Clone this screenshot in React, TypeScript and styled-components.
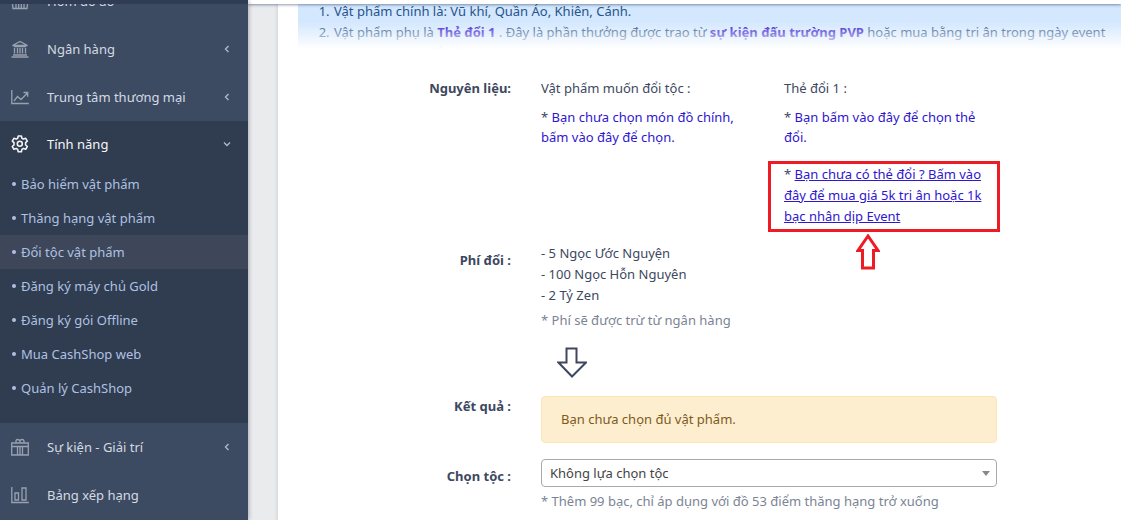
import React from 'react';
import styled, { createGlobalStyle, css } from 'styled-components';

const GlobalStyle = createGlobalStyle`
  *, *::before, *::after { box-sizing: border-box; }
  html { height: 100%; }
  body {
    margin: 0;
    background: #eaebed;
    color: #3d4860;
    font-family: "Segoe UI", "Noto Sans", "Open Sans", sans-serif;
    font-size: 13px;
    line-height: 21px;
    overflow: hidden;
  }
  a { color: #2f16cf; text-decoration: none; }
`;

const Page = styled.div`
  display: grid;
  grid-template-columns: 248px minmax(0, 1fr);
  height: 100vh;
  overflow: hidden;
`;

const Sidebar = styled.aside`
  background: #3c4b62;
  border-top: 4px solid #303c53;
  box-shadow: 1px 0 4px rgba(30, 40, 60, 0.3);
  overflow: hidden;
  z-index: 2;
`;

const Menu = styled.ul`
  list-style: none;
  margin: 0;
  padding: 0;
`;

const MainMenu = styled(Menu)`
  margin-top: -27px;
`;

const MenuGroup = styled.li<{ $open?: boolean }>`
  ${(p) => p.$open && css`
    background: #303c4f;
    padding-bottom: 18px;
  `}
`;

const MenuLink = styled.a<{ $open?: boolean }>`
  display: flex;
  align-items: center;
  height: ${(p) => (p.$open ? 46 : 48)}px;
  padding: 0 16px 0 11px;
  color: ${(p) => (p.$open ? '#f5f7fa' : '#d5dae2')};

  > svg:first-child {
    width: 18px;
    height: 18px;
    margin-right: 18px;
    color: ${(p) => (p.$open ? '#f0f2f5' : '#98a1b0')};
  }
  > span { flex: 1; }
`;

const SubLink = styled.a<{ $current?: boolean }>`
  display: flex;
  align-items: center;
  gap: 5px;
  height: 34px;
  padding-left: 12px;
  color: #afc1e2;
  background: ${(p) => (p.$current ? '#3d4759' : 'transparent')};

  &::before {
    content: '';
    width: 4px;
    height: 4px;
    border-radius: 50%;
    background: currentColor;
  }
`;

const Main = styled.main`
  display: flex;
  flex-direction: column;
  overflow: hidden;
`;

const TopBar = styled.header`
  flex: none;
  height: 4px;
  background: #fff;
  box-shadow: 0 1px 3px rgba(50, 65, 100, 0.55);
  z-index: 1;
`;

const Card = styled.section`
  flex: 1;
  margin-left: 30px;
  padding-left: 20px;
  background: #fff;
  box-shadow: 0 0 4px rgba(40, 50, 80, 0.2);
`;

const Notice = styled.div`
  position: relative;
  height: 46px;
  overflow: hidden;
  background: #d3e7fe;
  color: #27548a;
  white-space: nowrap;

  &::after {
    content: '';
    position: absolute;
    inset: 0;
    background: linear-gradient(rgba(255, 255, 255, 0) 38%, #fff 98%);
    pointer-events: none;
  }
`;

const NoticeList = styled.ol`
  margin: -3px 0 0;
  padding-left: 35px;
  li { padding-left: 1px; }
`;

const Form = styled.form`
  display: flex;
  flex-direction: column;
  padding-top: 28px;
`;

const Row = styled.div<{ $gap?: number }>`
  display: grid;
  grid-template-columns: 213px 456px;
  column-gap: 30px;
  margin-bottom: ${(p) => p.$gap ?? 16}px;
`;

const Label = styled.label<{ $drop?: boolean }>`
  text-align: right;
  font-weight: 700;
  padding-top: ${(p) => (p.$drop ? 7 : 0)}px;
`;

const Columns = styled.div`
  display: grid;
  grid-template-columns: 213px 213px;
  column-gap: 30px;
`;

const Text = styled.p`
  margin: 0;
`;

const Choice = styled.p`
  margin: 8px 0 0;
  line-height: 20px;
`;

const Highlight = styled.div`
  position: relative;
  margin: 14px -16px 0;
  width: 232px;
  padding: 0 8px 2px 13px;
  border: 3px solid #ed1c24;

  a { text-decoration: underline; }
`;

const Pointer = styled.svg`
  position: absolute;
  top: 100%;
  left: 85px;
  margin-top: 5px;
`;

const Hint = styled.small`
  display: block;
  margin-top: 4px;
  font-size: 13px;
  color: #7b8494;
`;

const Down = styled.svg`
  display: block;
  margin: 16px 0 0 16px;
`;

const Warning = styled.div`
  padding: 12px 19px;
  border: 1px solid #fde4b4;
  border-radius: 4px;
  background: #fdeed0;
  color: #7d5a1c;
`;

const SelectBox = styled.div`
  position: relative;

  svg {
    position: absolute;
    right: 7px;
    top: 12px;
    pointer-events: none;
  }
`;

const Select = styled.select`
  appearance: none;
  display: block;
  width: 100%;
  height: 28px;
  padding: 0 24px 0 8px;
  border: 1px solid #aaa;
  border-radius: 4px;
  background: #fff;
  color: #444;
  font: inherit;
`;

const paths = {
  basket: 'M0.500 6h17M1 7l1 9.500h14L17 7M5 9v7M7.700 9v7M10.300 9v7M13 9v7M4 5l3-4M14 5l-3-4',
  bank: 'M1.500 5.500L9 1.500l7.500 4zM3 6.500h12M3.500 8v5.500M6.500 8v5.500M9 8v5.500M11.500 8v5.500M14.500 8v5.500M2 15h14M0.500 17h17',
  graph: 'M0.800 2v13.500h17M3 13l3.500-4.500 3.500 3L16.500 5M12.500 4.500h4.200v4.200',
  gift: 'M0.700 5h16.600v12H0.700zM0.700 8.500h16.600M6.500 8.500V17M9 8.500V17M11.500 8.500V17M5 5V3q0-1.500 1.500-1.500T9 3q0-1.500 2-1.500T13 3v2M9 3v2',
  bars: 'M0.800 1v15.500h17M4 7h3.500v7H4zM11 2h4v12h-4z',
};

const LineIcon = ({ name }: { name: keyof typeof paths }) => (
  <svg viewBox="0 0 18 18" fill="none" stroke="currentColor" strokeWidth="1.300" aria-hidden="true">
    <path d={paths[name]} />
  </svg>
);

const GearIcon = () => (
  <svg viewBox="0 0 18 18" fill="none" stroke="currentColor" strokeWidth="1.600" strokeLinejoin="round" aria-hidden="true">
    <path d="M7.200 1h3.200l.5 2.200 1.500.9 2.300-.8 1.600 2.800-1.700 1.600v2.200l1.700 1.600-1.600 2.800-2.300-.8-1.500.9-.5 2.400H7.200l-.5-2.400-1.500-.9-2.300.8-1.600-2.800L3 9.900V7.700L1.300 6.100l1.600-2.800 2.300.8 1.500-.9z" />
    <circle cx="8.800" cy="8.800" r="2.500" />
  </svg>
);

const Chevron = ({ down }: { down?: boolean }) => (
  <svg width="10" height="8" viewBox="0 0 10 8" fill="none" stroke="#b0b7c3" strokeWidth="1.400" aria-hidden="true">
    <path d={down ? 'M2 2.500l3 3 3-3' : 'M6.500 1L3.500 4l3 3'} />
  </svg>
);

const features = [
  'Bảo hiểm vật phẩm',
  'Thăng hạng vật phẩm',
  'Đổi tộc vật phẩm',
  'Đăng ký máy chủ Gold',
  'Đăng ký gói Offline',
  'Mua CashShop web',
  'Quản lý CashShop',
];

export default function App() {
  return (
    <>
      <GlobalStyle />
      <Page>
        <Sidebar>
          <nav>
            <MainMenu>
              <MenuGroup><MenuLink href="#"><LineIcon name="basket" /><span>Hòm đồ ảo</span></MenuLink></MenuGroup>
              <MenuGroup><MenuLink href="#"><LineIcon name="bank" /><span>Ngân hàng</span><Chevron /></MenuLink></MenuGroup>
              <MenuGroup><MenuLink href="#"><LineIcon name="graph" /><span>Trung tâm thương mại</span><Chevron /></MenuLink></MenuGroup>
              <MenuGroup $open>
                <MenuLink href="#" $open><GearIcon /><span>Tính năng</span><Chevron down /></MenuLink>
                <Menu>
                  {features.map((name) => (
                    <li key={name}><SubLink href="#" $current={name === 'Đổi tộc vật phẩm'}>{name}</SubLink></li>
                  ))}
                </Menu>
              </MenuGroup>
              <MenuGroup><MenuLink href="#"><LineIcon name="gift" /><span>Sự kiện - Giải trí</span><Chevron /></MenuLink></MenuGroup>
              <MenuGroup><MenuLink href="#"><LineIcon name="bars" /><span>Bảng xếp hạng</span></MenuLink></MenuGroup>
            </MainMenu>
          </nav>
        </Sidebar>
        <Main>
          <TopBar />
          <Card>
            <Notice>
              <NoticeList>
                <li>Vật phẩm chính là: Vũ khí, Quần Áo, Khiên, Cánh.</li>
                <li>
                  Vật phẩm phụ là <a href="#"><b>Thẻ đổi 1</b></a> . Đây là phần thưởng được trao từ{' '}
                  <a href="#"><b>sự kiện đấu trường PVP</b></a> hoặc mua bằng tri ân trong ngày event
                </li>
                <li>Chỉ được phép đổi tộc trang bị vũ khí, khiên</li>
              </NoticeList>
            </Notice>
            <Form>
              <Row $gap={11}>
                <Label as="span">Nguyên liệu:</Label>
                <Columns>
                  <div>
                    <Text>Vật phẩm muốn đổi tộc :</Text>
                    <Choice>* <a href="#">Bạn chưa chọn món đồ chính, bấm vào đây để chọn.</a></Choice>
                  </div>
                  <div>
                    <Text>Thẻ đổi 1 :</Text>
                    <Choice>* <a href="#">Bạn bấm vào đây để chọn thẻ đổi.</a></Choice>
                    <Highlight>
                      * <a href="#">Bạn chưa có thẻ đổi ? Bấm vào đây để mua giá 5k tri ân hoặc 1k bạc nhân dịp Event</a>
                      <Pointer width="24" height="36" viewBox="0 0 24 36" fill="none" stroke="#ed1c24" strokeWidth="3" aria-hidden="true">
                        <path d="M12 2L2 16.500h4.500V34h11V16.500H22z" />
                      </Pointer>
                    </Highlight>
                  </div>
                </Columns>
              </Row>
              <Row $gap={18}>
                <Label as="span" $drop>Phí đổi :</Label>
                <div>
                  <Text>- 5 Ngọc Ước Nguyện</Text>
                  <Text>- 100 Ngọc Hỗn Nguyên</Text>
                  <Text>- 2 Tỷ Zen</Text>
                  <Hint>* Phí sẽ được trừ từ ngân hàng</Hint>
                  <Down width="30" height="31" viewBox="0 0 30 31" fill="none" stroke="#3d4860" strokeWidth="2" aria-hidden="true">
                    <path d="M9.500 1.500h10v14H29L15 29.500 1.500 15.500h8z" />
                  </Down>
                </div>
              </Row>
              <Row>
                <Label as="span">Kết quả :</Label>
                <Warning role="alert">Bạn chưa chọn đủ vật phẩm.</Warning>
              </Row>
              <Row>
                <Label htmlFor="clan" $drop>Chọn tộc :</Label>
                <div>
                  <SelectBox>
                    <Select id="clan"><option>Không lựa chọn tộc</option></Select>
                    <svg width="8" height="5" viewBox="0 0 8 5" aria-hidden="true"><path d="M0 0h8L4 5z" fill="#888" /></svg>
                  </SelectBox>
                  <Hint>* Thêm 99 bạc, chỉ áp dụng với đồ 53 điểm thăng hạng trở xuống</Hint>
                </div>
              </Row>
            </Form>
          </Card>
        </Main>
      </Page>
    </>
  );
}
